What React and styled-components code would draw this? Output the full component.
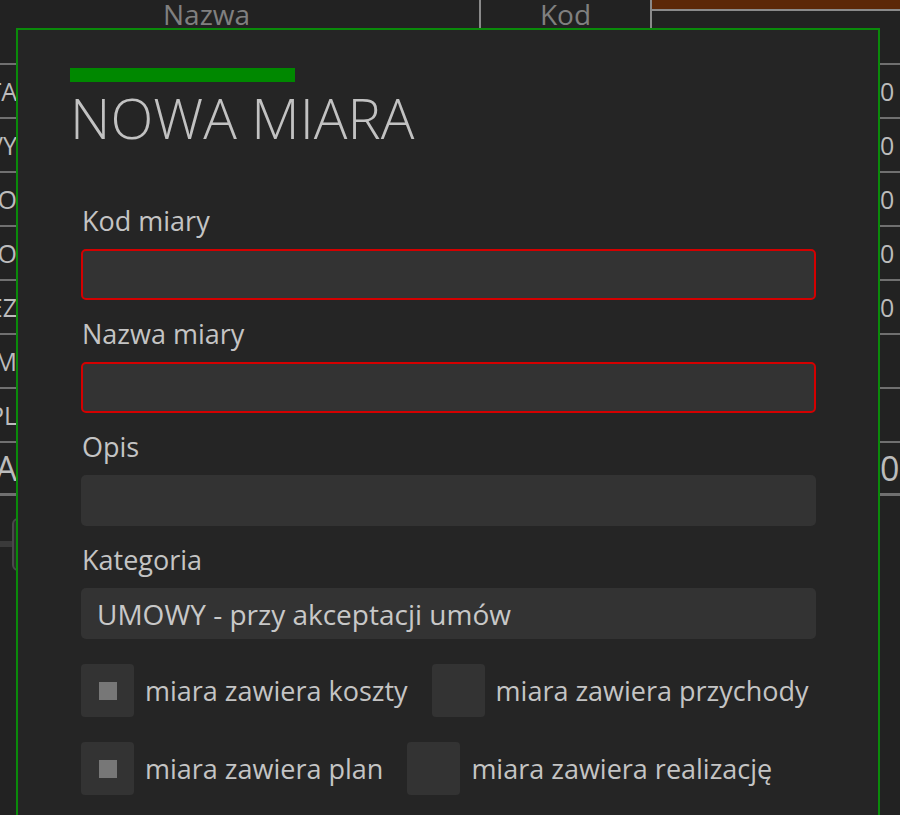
import React from "react";
import styled, { createGlobalStyle } from "styled-components";

const GlobalStyle = createGlobalStyle`
  html, body {
    margin: 0;
    background: #222222;
    font-family: "Open Sans", "Noto Sans", sans-serif;
    color: #c4c4c4;
  }
`;

const Page = styled.div`
  position: relative;
  height: 815px;
  overflow: hidden;
`;

// table behind the dialog
const Table = styled.div`
  display: flex;
  flex-direction: column;
`;

const HeaderRow = styled.div`
  display: grid;
  grid-template-columns: 481px 171px 1fr;
  height: 63px;
`;

const HeaderCell = styled.div`
  display: flex;
  justify-content: ${(p) => (p.$center ? "center" : "flex-start")};
  padding-left: ${(p) => p.$indent || 0}px;
  border-right: ${(p) => (p.$divider ? "2px solid #8a8a8a" : "none")};
  height: 28px;
  font-size: 28px;
  line-height: 28px;
  color: #808080;
  overflow: hidden;
`;

const SortCell = styled.div`
  height: 9px;
  background: #5c2808;
  border-bottom: 2px solid #8a8a8a;
`;

const Row = styled.div`
  display: grid;
  grid-template-columns: 17px 1fr 22px;
  box-sizing: border-box;
  height: ${(p) => (p.$last ? 55 : 54)}px;
  border-top: 2px solid #707070;
  border-bottom: ${(p) => (p.$last ? "3px solid #707070" : "none")};
  align-items: center;
  font-size: ${(p) => (p.$big ? 34 : 25)}px;
  color: #bcbcbc;
`;

const Cut = styled.div`
  display: flex;
  justify-content: flex-end;
  overflow: hidden;
  white-space: nowrap;
`;

const Value = styled.div`
  padding-left: 2px;
  overflow: hidden;
`;

const Footer = styled.div`
  display: flex;
  align-items: center;
  height: 96px;
`;

const Track = styled.div`
  width: 12px;
  height: 6px;
  background: #3a3a3a;
`;

const Thumb = styled.div`
  width: 20px;
  height: 53px;
  box-sizing: border-box;
  border: 2px solid #4a4a4a;
  border-radius: 6px;
  background: #2c2c2c;
`;

// dialog
const Dialog = styled.div`
  position: absolute;
  left: 16px;
  top: 28px;
  width: 864px;
  height: 820px;
  box-sizing: border-box;
  border: 2px solid #0a8a0a;
  background: #252525;
  padding: 38px 62px 0 52px;
`;

const Accent = styled.div`
  width: 225px;
  height: 14px;
  background: #008800;
`;

const Title = styled.h1`
  margin: 3px 0 0;
  font-size: 56px;
  line-height: 65px;
  font-weight: 300;
  color: #c2c2c2;
`;

const Form = styled.div`
  display: flex;
  flex-direction: column;
  gap: 14px;
  margin-top: 51px;
  padding-left: 11px;
`;

const Field = styled.div`
  display: flex;
  flex-direction: column;
`;

const Label = styled.label`
  height: 36px;
  margin-bottom: 12px;
  padding-left: 1px;
  font-size: 27px;
  line-height: 40px;
  color: #c4c4c4;
`;

const Input = styled.div`
  height: 51px;
  box-sizing: border-box;
  border-radius: 5px;
  background: #333333;
  border: ${(p) => (p.$invalid ? "2px solid #d40000" : "none")};
  display: flex;
  align-items: center;
  padding-left: 16px;
  font-size: 28px;
  color: #c8c8c8;
`;

const Checks = styled.div`
  display: flex;
  flex-direction: column;
  gap: 25px;
  margin-top: 11px;
`;

const CheckRow = styled.div`
  display: flex;
  gap: 24px;
`;

const Check = styled.div`
  display: flex;
  align-items: center;
  gap: 11px;
  font-size: 27px;
  color: #c4c4c4;
`;

const Box = styled.div`
  width: 53px;
  height: 53px;
  border-radius: 4px;
  background: #333333;
  display: flex;
  align-items: center;
  justify-content: center;

  &::after {
    content: "";
    display: ${(p) => (p.$on ? "block" : "none")};
    width: 18px;
    height: 18px;
    background: #777777;
  }
`;

const rows = [
  { left: "TA", value: "0" },
  { left: "VY", value: "0" },
  { left: "O", value: "0" },
  { left: "O", value: "0" },
  { left: "EZ", value: "0" },
  { left: "M", value: "" },
  { left: "PL", value: "" },
  { left: "RA", value: "0", big: true, last: true },
];

const checkRows = [
  [
    { text: "miara zawiera koszty", on: true },
    { text: "miara zawiera przychody", on: false },
  ],
  [
    { text: "miara zawiera plan", on: true },
    { text: "miara zawiera realizację", on: false },
  ],
];

export default function App() {
  return (
    <Page>
      <GlobalStyle />
      <Table>
        <HeaderRow>
          <HeaderCell $indent={163} $divider>Nazwa</HeaderCell>
          <HeaderCell $center $divider>Kod</HeaderCell>
          <SortCell />
        </HeaderRow>
        {rows.map((r, i) => (
          <Row key={i} $big={r.big} $last={r.last}>
            <Cut>{r.left}</Cut>
            <div />
            <Value>{r.value}</Value>
          </Row>
        ))}
        <Footer>
          <Track />
          <Thumb />
        </Footer>
      </Table>

      <Dialog>
        <Accent />
        <Title>NOWA MIARA</Title>
        <Form>
          <Field>
            <Label>Kod miary</Label>
            <Input $invalid />
          </Field>
          <Field>
            <Label>Nazwa miary</Label>
            <Input $invalid />
          </Field>
          <Field>
            <Label>Opis</Label>
            <Input />
          </Field>
          <Field>
            <Label>Kategoria</Label>
            <Input>UMOWY - przy akceptacji umów</Input>
          </Field>
          <Checks>
            {checkRows.map((row, i) => (
              <CheckRow key={i}>
                {row.map((c) => (
                  <Check key={c.text}>
                    <Box $on={c.on} />
                    {c.text}
                  </Check>
                ))}
              </CheckRow>
            ))}
          </Checks>
        </Form>
      </Dialog>
    </Page>
  );
}
